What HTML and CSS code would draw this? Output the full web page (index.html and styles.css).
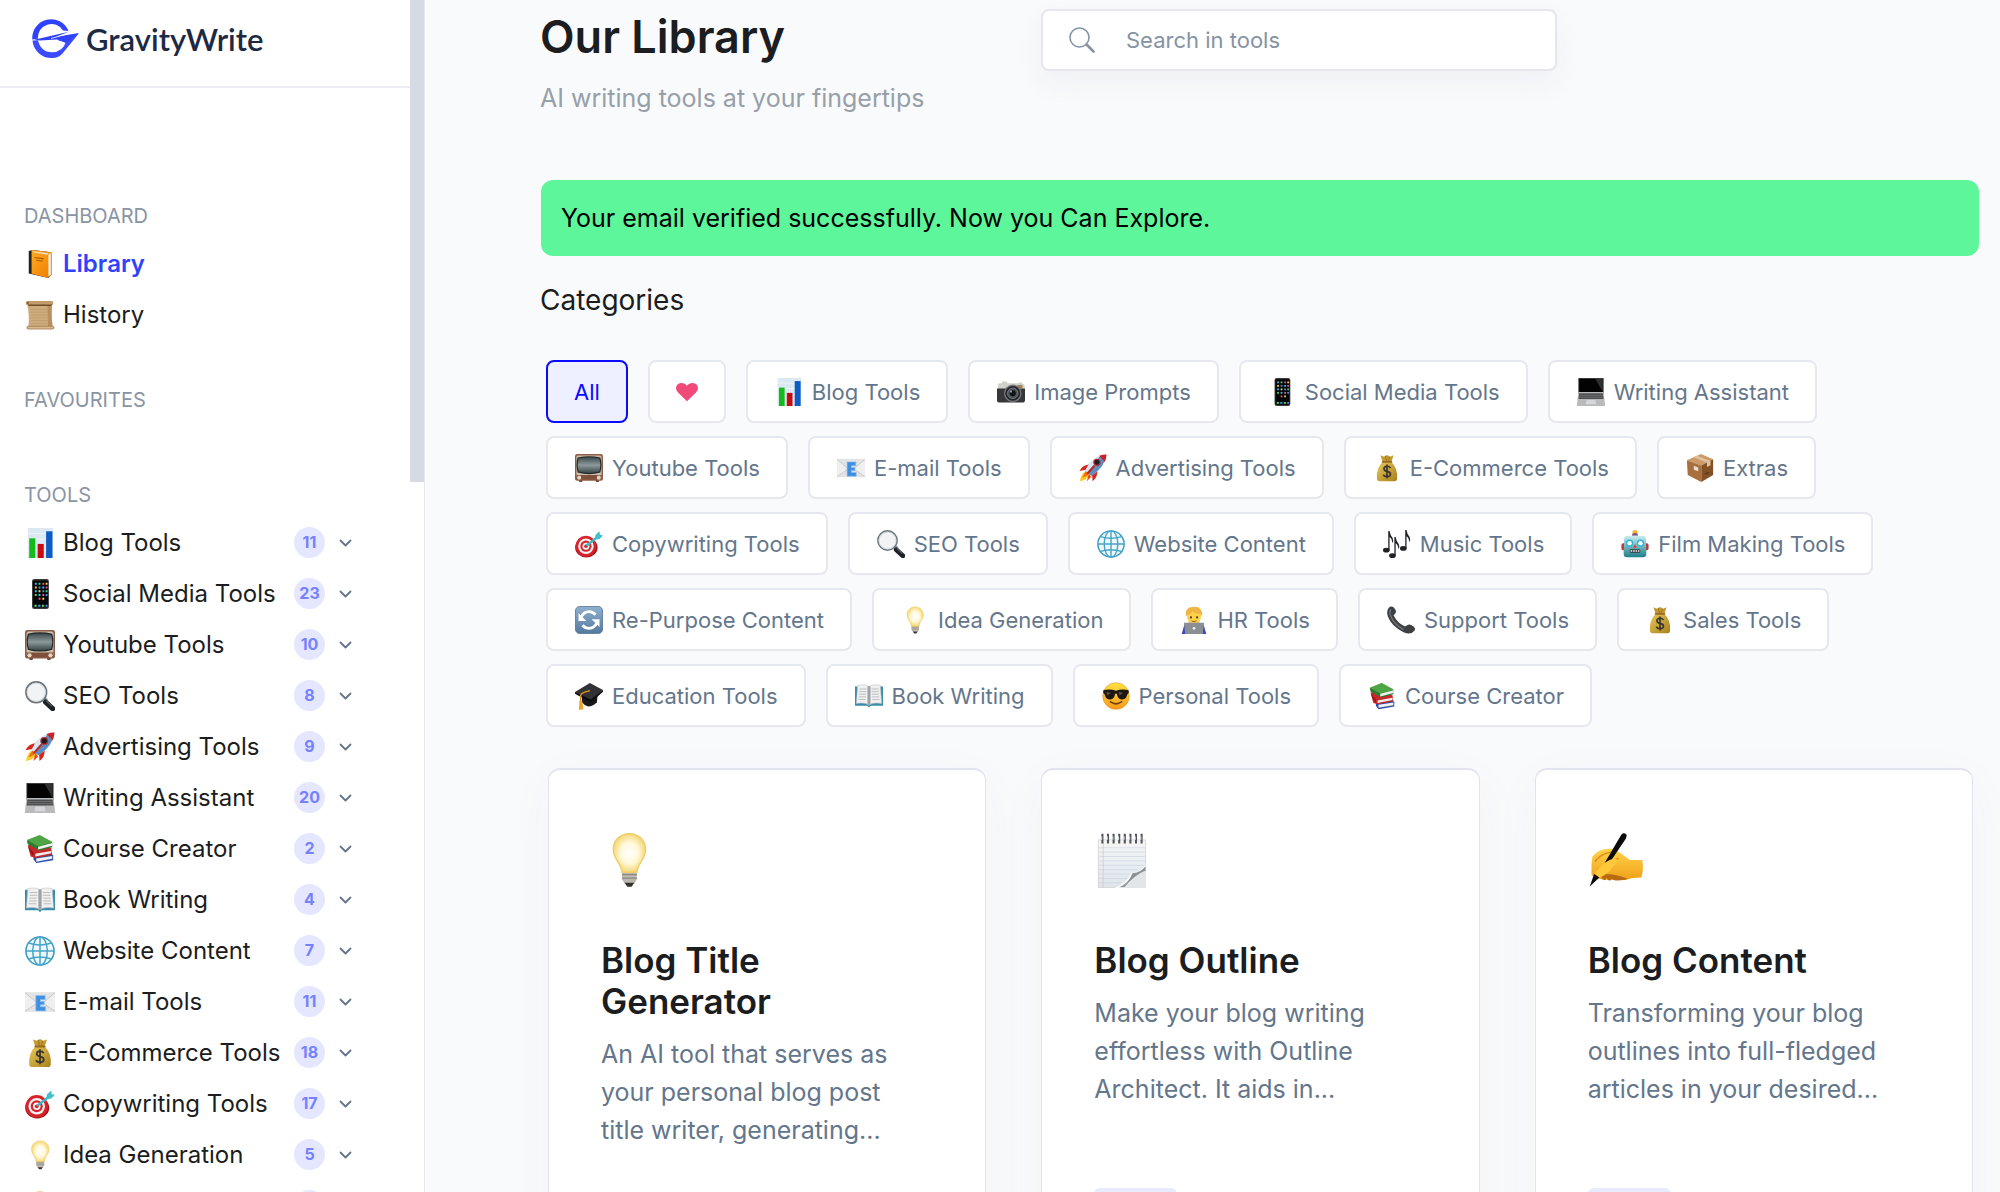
FILE: index.html
```html
<!DOCTYPE html>
<html lang="en">
<head>
    <meta charset="utf-8">
    <title>GravityWrite</title>
    <link rel="stylesheet" href="styles.css">
</head>
<body>
    <!-- icon set -->
    <svg class="sprite" aria-hidden="true">
        <defs>
            <linearGradient id="gScreen" x1="0" y1="0" x2="0" y2="1"><stop offset="0" stop-color="#3f4a4c"/><stop offset=".5" stop-color="#8c9a9b"/><stop offset="1" stop-color="#3a4546"/></linearGradient>
            <linearGradient id="gBlue" x1="0" y1="0" x2="0" y2="1"><stop offset="0" stop-color="#8fb0cf"/><stop offset="1" stop-color="#54799f"/></linearGradient>
            <linearGradient id="gGold" x1="0" y1="0" x2="1" y2="1"><stop offset="0" stop-color="#e8c95a"/><stop offset="1" stop-color="#a8801b"/></linearGradient>
            <linearGradient id="gOrange" x1="0" y1="0" x2="1" y2="1"><stop offset="0" stop-color="#ffab1f"/><stop offset="1" stop-color="#ee7d00"/></linearGradient>
            <linearGradient id="gTeal" x1="0" y1="0" x2="0" y2="1"><stop offset="0" stop-color="#c9eeee"/><stop offset="1" stop-color="#1e7f8c"/></linearGradient>
            <linearGradient id="gFace" x1="0" y1="0" x2="0" y2="1"><stop offset="0" stop-color="#ffe23f"/><stop offset="1" stop-color="#f79a1c"/></linearGradient>
            <radialGradient id="gBulb"><stop offset="0" stop-color="#ffffff"/><stop offset=".55" stop-color="#fff9da"/><stop offset="1" stop-color="#f6d877"/></radialGradient>
            <linearGradient id="gPaper" x1="0" y1="0" x2="0" y2="1"><stop offset="0" stop-color="#f6f5f2"/><stop offset=".5" stop-color="#e9eef3"/><stop offset="1" stop-color="#dfe4e8"/></linearGradient>
            <linearGradient id="gHand" x1="0" y1="0" x2="0" y2="1"><stop offset="0" stop-color="#ffd54a"/><stop offset="1" stop-color="#f0a01a"/></linearGradient>
        </defs>
        <symbol id="book" viewBox="0 0 32 32">
            <path d="M4 2L8 1 28 3.500V27L25 31 4 26z" fill="#222"/>
            <path d="M8 2.500L28 4V27.500L24 30V7z" fill="#f4f4f0" stroke="#c77a16" stroke-width=".8"/>
            <path d="M7 1L28 3.500 25 6V31L7 26.500z" fill="url(#gOrange)"/>
            <path d="M8 2.500l17 2-1.500 1.500L9 3.500z" fill="#e9e4d6"/>
            <path d="M10 9l10 1.500M12 12l7 1" stroke="#a85c07" stroke-width="1.200"/>
        </symbol>
        <symbol id="scroll" viewBox="0 0 32 32">
            <path d="M2.500 5h26v24h-25q1.500-12-1-24z" fill="#cfac7c"/>
            <path d="M24 5h4.500q-1 12 1 23h-5z" fill="#b98f5d"/>
            <path d="M6 10h18M6 13h18M6 16h18M6 19h18M6 22h18M6 25h18" stroke="#bb9768" stroke-width=".7"/>
            <rect x="1" y="1" width="29" height="4.500" rx="1.500" fill="#c49c69"/>
            <path d="M3 4.800h26l-1 1.700H4z" fill="#6f4d2c"/>
            <rect x="2" y="28" width="29" height="3" rx="1.500" fill="#dbb98a" stroke="#8c6640" stroke-width=".7"/>
            <circle cx="3" cy="3.200" r="1.200" fill="#7f5a34"/>
        </symbol>
        <symbol id="chart" viewBox="0 0 32 32">
            <rect x="3" y="0" width="27" height="32" fill="#dce8f2"/>
            <path d="M3 6h27M3 12h27M3 18h27M3 24h27" stroke="#eef4f9"/>
            <rect x="4.500" y="11" width="6.500" height="21" fill="#14ba1b"/>
            <rect x="13.500" y="17" width="6.500" height="15" fill="#c30d12"/>
            <rect x="22.500" y="3.500" width="6.800" height="28.500" fill="#0d5cc4"/>
        </symbol>
        <symbol id="mobile" viewBox="0 0 32 32">
            <rect x="7.500" y="0" width="18" height="32" rx="2.500" fill="#3a3a3a"/>
            <rect x="8.500" y="1.500" width="16" height="29" rx="1.500" fill="#060606"/>
            <path d="M10.500 5h2M10.500 13h2M18.500 9h2M14.500 17h2" stroke="#34c5f5" stroke-width="2"/>
            <path d="M14.500 5h2M10.500 17h2M22 13h2M10 28.500h2.500M18 28.500h2.500" stroke="#48d868" stroke-width="2"/>
            <path d="M18.500 5h2M22 9h2M14.500 21h2M18.500 17h2" stroke="#f0508c" stroke-width="2"/>
            <path d="M22 5h2M10.500 9h2M18.500 21h2M14.500 13h2" stroke="#f5d24a" stroke-width="2"/>
            <path d="M14.500 9h2M18.500 13h2M22 17h2M14 28.500h2.500M22 28.500h2" stroke="#4a90f0" stroke-width="2"/>
        </symbol>
        <symbol id="tv" viewBox="0 0 32 32">
            <path d="M4 29h5l-1 3H5zM23 29h5l-1 3h-3z" fill="#6b4534"/>
            <rect x="0" y="0" width="32" height="30.500" rx="2.500" fill="#8c5c47"/>
            <rect x="1.600" y="1.600" width="28.800" height="27" rx="2" fill="#cbbfae"/>
            <path d="M3 4q13-3 26 0 2.500 8 0 17-13 4-26 0-2.500-9 0-17z" fill="#20282a"/>
            <path d="M4 5q12-2.500 24 0 2 7.500 0 15-12 3.500-24 0-2-7.500 0-15z" fill="url(#gScreen)"/>
            <rect x="1.600" y="24" width="28.800" height="5" fill="#80503d"/>
            <circle cx="4.800" cy="27" r="2.300" fill="#e5d6c4"/><circle cx="27.200" cy="27" r="2.300" fill="#e5d6c4"/>
        </symbol>
        <symbol id="lens" viewBox="0 0 32 32">
            <path d="M18.500 19l3-2.500 3 3.500-3 2.500z" fill="#9aa2a8"/>
            <path d="M22 22.500l7.500 7" stroke="#1d2226" stroke-width="5.500" stroke-linecap="round"/>
            <path d="M22.500 21l6.500 6" stroke="#5a646b" stroke-width="1.200"/>
            <circle cx="12" cy="12" r="11" fill="#f1f3f4" stroke="#6b747b" stroke-width="1.800"/>
            <circle cx="12" cy="12" r="9.800" fill="none" stroke="#cdd3d7" stroke-width="1"/>
        </symbol>
        <symbol id="rocket" viewBox="0 0 32 32">
            <path d="M8 19Q2 23 1 31q7-1 12-7z" fill="#ffc928"/>
            <path d="M8 20q-3 3-4 7 4-1 7-4z" fill="#f36c12"/>
            <path d="M12 12Q4 12 .5 19.500L8 18zM21 20q0 7-5.500 11L15 24z" fill="#d8261c"/>
            <path d="M11 23l-2 8 5-5z" fill="#e84a1a"/>
            <path d="M7 19Q13 4 31 .5 30 15 14 25z" fill="#5c8fc0"/>
            <path d="M7 19Q13 5 24 2L11 22z" fill="#dbe7f2"/>
            <path d="M23 2q4-1.500 8.500-1.500Q31 6 29.500 9z" fill="#c9222a"/>
            <circle cx="20.500" cy="9.500" r="4.200" fill="#b52a2c"/><circle cx="20.500" cy="9.500" r="2.800" fill="#1c1d24"/>
            <path d="M17 14l-7 8" stroke="#b62a27" stroke-width="2.400" stroke-linecap="round"/>
        </symbol>
        <symbol id="laptop" viewBox="0 0 32 32">
            <path d="M1.500 0h29v18.500h-29z" fill="#3f4143"/>
            <path d="M2.500 1h27v15h-27z" fill="#030303"/>
            <path d="M21 1h8.500v15z" fill="#2e3032"/>
            <path d="M1.500 16h29l1.500 14v2H0v-2z" fill="#b9babb"/>
            <path d="M2.500 17.500h27l.8 6.500H1.800z" fill="#4b4d4f"/>
            <path d="M2 19.700h28M2 22h28" stroke="#808284" stroke-width=".7"/>
            <path d="M11 25h10l1 5H10z" fill="#d6d7d8"/>
        </symbol>
        <symbol id="books" viewBox="0 0 32 32">
            <path d="M9 22l18-2 3 3v5l-18 3-3-4z" fill="#2b4ba6"/>
            <path d="M12 26l17-2.500v3L12 29.500z" fill="#f2f2f4"/>
            <path d="M3 12l6-1 19 4 1 7-18 3.500L6 24z" fill="#c9282a"/>
            <path d="M11 21l17-3v2.500L11 24z" fill="#efeff2"/>
            <path d="M3 13l6 7v4L5 18z" fill="#8d1518"/>
            <path d="M2 7l14-5.500L29 9v5l-14 3.500L3 11z" fill="#2c7c2e"/>
            <path d="M2 6.500L15.500 1 29.500 8.500 14 13z" fill="#4fa443"/>
            <path d="M14 13.500l15-4v3L14 16.500z" fill="#f1f2ee"/>
        </symbol>
        <symbol id="openbook" viewBox="0 0 32 32">
            <path d="M0 5h32v22H18l-2 2-2-2H0z" fill="#3b8bab"/>
            <path d="M1.500 24.500L3 4q8-2 13 1 5-3 13-1l1.500 20.500Q20 23 16 26.500 12 23 1.500 24.500z" fill="#f0f0ee" stroke="#b9bcc0" stroke-width=".6"/>
            <path d="M14 5q2-1 4 0v20l-2 1.500-2-1.500z" fill="#b5b9be"/>
            <path d="M16 5v21" stroke="#74797f" stroke-width=".8"/>
            <path d="M5 8h8M5 11h8M4.700 14h8M4.500 17h8M4 20h8M19 8h8M19 11h8M19.300 14h8M19.500 17h8M20 20h8" stroke="#a8abb0" stroke-width=".8"/>
        </symbol>
        <symbol id="globe" viewBox="0 0 32 32">
            <circle cx="16" cy="16" r="15" fill="#f0f9fd" stroke="#3d9cc0" stroke-width="1.700"/>
            <g fill="none" stroke="#45a5c9" stroke-width="1.600"><ellipse cx="16" cy="16" rx="7.800" ry="15"/><path d="M16 1v30M1 16h30M4 7.500q12 4 24 0M4 24.500q12-4 24 0"/></g>
        </symbol>
        <symbol id="email" viewBox="0 0 32 32">
            <rect x="0" y="5.500" width="32" height="21" fill="#e4e4e5"/>
            <path d="M0 6l13 11L0 26M32 6L19 17l13 9" fill="#efeff0" stroke="#bfc0c2" stroke-width=".9"/>
            <path d="M11.500 9h10v4.500h-5v2h4v3.500h-4v2h5.500v4.500H11.500z" fill="#3f8fe0" stroke="#8fc2f4" stroke-width=".8"/>
        </symbol>
        <symbol id="moneybag" viewBox="0 0 32 32">
            <path d="M11 9L8.500 1.500l4 1.500L16 1l3.500 2 4-1.500L21 9z" fill="#c39a30"/>
            <path d="M14 2l1.500 6M19 3l-1.500 5" stroke="#8a6616" stroke-width=".8"/>
            <path d="M11 9h10q7.500 7 6.500 19 0 3-3 3h-17q-3 0-3-3Q3.500 16 11 9z" fill="url(#gGold)"/>
            <rect x="10" y="8" width="12" height="2" rx="1" fill="#9a6a22"/>
            <path d="M20 16q-1.500-2-4-2-3.500.3-3.500 2.900 0 2.300 3.500 2.900 4 .6 4 3.400 0 2.600-4 2.800-3 0-4.300-2.300M16 12v16" fill="none" stroke="#3a3630" stroke-width="1.900"/>
        </symbol>
        <symbol id="dart" viewBox="0 0 32 32">
            <ellipse cx="13" cy="20" rx="12.800" ry="11.500" fill="#a80f16"/>
            <circle cx="12.500" cy="18.500" r="12" fill="#d8232b"/>
            <circle cx="12.500" cy="18.500" r="8.800" fill="#f5f5f5"/>
            <circle cx="12.500" cy="18.500" r="6.400" fill="#d8232b"/>
            <circle cx="12.500" cy="18.500" r="4" fill="#f5f5f5"/>
            <circle cx="12.500" cy="18.500" r="2" fill="#d8232b"/>
            <path d="M13 18L27 7" stroke="#38b8c6" stroke-width="2.600"/>
            <path d="M22.500 11l1-5.500L28 1.500l.5 4 3.500.7-4 4z" fill="#41c0cc"/>
        </symbol>
        <symbol id="bulb" viewBox="0 0 32 32">
            <path d="M12 22h8.500v5l-1.500 2.500h-5.500L12 27z" fill="#bdb8af"/>
            <path d="M12 24.300h8.500M12 26.300h8.500" stroke="#8d887f" stroke-width=".7"/>
            <path d="M13.500 29h5.500l-1.500 2.300h-2.500z" fill="#34322f"/>
            <path d="M16.200 1c-5.500 0-9.200 4-9.200 9 0 5.500 4.500 7.500 5 13h8.500c.5-5.500 5-7.500 5-13 0-5-3.800-9-9.300-9z" fill="url(#gBulb)" stroke="#efcd67" stroke-width=".8"/>
        </symbol>
        <symbol id="cool" viewBox="0 0 32 32">
            <circle cx="16" cy="16" r="15.200" fill="url(#gFace)" stroke="#e08a1a" stroke-width=".6"/>
            <path d="M1.500 9.500Q9 7.500 16 10q7-2.500 14.500-.5v3q-1.500.5-2 3-1 4.500-6 4.500-4.500 0-5.500-6.500h-2Q14 20 9.500 20q-5 0-6-4.500-.5-2.500-2-3z" fill="#1c1712"/>
            <path d="M5 11l5 1.500-4 3M19 11l5 1.500-4 3" fill="#5a5149"/>
            <path d="M9.500 22.500q6.500 5 13 0" fill="none" stroke="#73400c" stroke-width="1.700" stroke-linecap="round"/>
        </symbol>
        <symbol id="camera" viewBox="0 0 32 32">
            <path d="M1 8q0-2 2-2h2l1-2h5l1 2h13V5h4v1.500q2 0 2.500 2V13H1z" fill="#d2d2cc"/>
            <path d="M0 12h32v13q0 3-3 3H3q-3 0-3-3z" fill="#35373a"/>
            <rect x="23.500" y="8" width="5.500" height="4" fill="#9b8350"/>
            <circle cx="18" cy="17.500" r="10" fill="#77797b"/><circle cx="18" cy="17.500" r="8.500" fill="#222427"/>
            <circle cx="18" cy="17.500" r="6" fill="#4d5256" stroke="#929699" stroke-width=".8"/><circle cx="18" cy="17.500" r="3.500" fill="#121417"/>
            <circle cx="16" cy="15.500" r="1.300" fill="#90a0ac"/>
        </symbol>
        <symbol id="box" viewBox="0 0 32 32">
            <path d="M1 7L17 0l14 6-13.500 7z" fill="#cb9a68"/>
            <path d="M1 7l16.500 6V32L2 24z" fill="#a96f3c"/>
            <path d="M17.500 13L31 6v18L17.500 32z" fill="#845026"/>
            <path d="M8.500 3.700L24 9.800v5l4-2V8L12.500 2z" fill="#e0c19c"/>
            <path d="M9 13.500l5 1.800v4.500L9 18z" fill="#e5ded5"/>
            <path d="M22 23l4-2" stroke="#5a3417" stroke-width="1.500"/>
        </symbol>
        <symbol id="music" viewBox="0 0 32 32">
            <g fill="#202326">
                <ellipse cx="3.800" cy="23" rx="3.800" ry="2.600"/><path d="M6 1h1.500q.5 4.500 3.500 8 1.500 3-.5 6 0-5-3-7v15H6z"/>
                <ellipse cx="10.800" cy="29.300" rx="3.800" ry="2.600"/><path d="M13 8h1.500q.5 4.500 3.500 8 1.500 3-.5 6 0-5-3-7v14.500H13z"/>
                <ellipse cx="23.200" cy="21" rx="3.800" ry="2.600"/><path d="M25.400 0h1.500q.5 4.500 3.500 8 1.500 3-.5 6 0-5-3-7v14h-1.500z"/>
            </g>
        </symbol>
        <symbol id="robot" viewBox="0 0 32 32">
            <circle cx="16" cy="3" r="3" fill="#f5b52d"/><path d="M12.500 6.500q0-3 3.500-3t3.500 3z" fill="#76548a"/>
            <rect x=".5" y="15" width="5" height="8" rx="2" fill="#b9343c"/><rect x="26.500" y="15" width="5" height="8" rx="2" fill="#b9343c"/>
            <path d="M7 6.500h18q3.500 0 3.500 4L29 27q0 4-4 4H7q-4 0-4-4l.5-16.500q0-4 3.500-4z" fill="url(#gTeal)"/>
            <circle cx="9.800" cy="15" r="4.200" fill="#30b6d8"/><circle cx="22.200" cy="15" r="4.200" fill="#30b6d8"/>
            <circle cx="9.800" cy="15" r="2.500" fill="#fff"/><circle cx="22.200" cy="15" r="2.500" fill="#fff"/>
            <path d="M16 16l2.200 4.200h-4.400z" fill="#d2433c"/>
            <rect x="10" y="22" width="12" height="4" rx="1.500" fill="#37393d"/><path d="M11 24h10" stroke="#f4f4f4" stroke-width="1.800" stroke-dasharray="1.800 1"/>
        </symbol>
        <symbol id="cycle" viewBox="0 0 32 32">
            <rect x=".5" y=".5" width="31" height="31" rx="5" fill="url(#gBlue)" stroke="#57779a"/>
            <path d="M6.500 14q3-7.500 9.500-7.500 4.500 0 7.500 3.500M25.500 18q-3 7.500-9.500 7.500-4.500 0-7.500-3.500" fill="none" stroke="#fff" stroke-width="3.200"/>
            <path d="M4 8v9h9zM28 24v-9h-9z" fill="#fff"/>
        </symbol>
        <symbol id="coder" viewBox="0 0 32 32">
            <path d="M2 32l3-11q11-6 22 0l3 11z" fill="#3b46c4"/>
            <path d="M8 11q0-8 8-8t8 8q0 9-8 10-8-1-8-10z" fill="#ffd04b"/>
            <path d="M6.500 12Q5 1 15 1q11-1 10.500 11l-2-3q-6 0-9-3-2 3.500-6 4z" fill="#efb544"/>
            <circle cx="12.500" cy="13" r="1.200" fill="#513617"/><circle cx="19.500" cy="13" r="1.200" fill="#513617"/>
            <path d="M13 17q3 1.800 6 0" fill="none" stroke="#8a5417"/>
            <path d="M4.500 19h23L26 32H6z" fill="#8b8f94"/><circle cx="16" cy="25.500" r="1.500" fill="#f2f2f2"/>
        </symbol>
        <symbol id="tel" viewBox="0 0 32 32">
            <path d="M2 2q3-3 6 0 4 4 1 7l-1.500 1.500q4 8.500 13 13L23 22q3-2 7 1 3.500 3 1 5.500-4 5-12 1.500Q5 23 1 12-1 6 2 2z" fill="#3e4144"/>
            <path d="M4.500 4q-2.500 3 0 8Q8 21 19 27" fill="none" stroke="#74787b" stroke-width="1.500"/>
        </symbol>
        <symbol id="gradcap" viewBox="0 0 32 32">
            <path d="M8 14l18-1-1 10q-5 5-10 5-4-1-7-5z" fill="#17181a"/>
            <path d="M0 11.500L17 1l15 8-14 13z" fill="#303235"/>
            <path d="M0 11.500L18 20l14-11v2L18 23.500 0 13.500z" fill="#0c0d0e"/>
            <path d="M17 10Q7 12 6.500 15v8" fill="none" stroke="#d88b1e" stroke-width="1.800"/>
            <path d="M5 22h3.500l1 9-5 1z" fill="#eda32d"/>
        </symbol>
        <symbol id="notepad" viewBox="0 0 32 32">
            <path d="M2.500 4.500h27V32h-27z" fill="url(#gPaper)" stroke="#c9cdd2" stroke-width=".4"/>
            <path d="M3 9h26M3 11.500h26M3 14h26M3 16.500h26M3 19h26M3 21.500h22M3 24h18M3 26.500h16M3 29h13" stroke="#c5d3de" stroke-width=".35"/>
            <path d="M5.300 6v26" stroke="#eebcbc" stroke-width=".4"/>
            <path d="M29.500 18.500V32h-18q7-2.500 9.500-8.500 5.500 0 8.500-5z" fill="#fafbfb"/>
            <path d="M29.500 19.500v3Q22 26 17.500 31.500H14.500Q20 29 22 23.500q4.500-.2 7.500-4z" fill="#8c9196"/>
            <path d="M29.500 22v10H17q6-7.500 12.500-10z" fill="#e3e6e9"/>
            <path d="M4.800 1v5.500M8 1v5.500M11.200 1v5.500M14.400 1v5.500M17.600 1v5.500M20.800 1v5.500M24 1v5.500M27.200 1v5.500" stroke="#50565c" stroke-width="1.200"/>
            <path d="M4.400 2.500v2M7.600 2.500v2M10.800 2.500v2M14 2.500v2M17.200 2.500v2M20.400 2.500v2M23.600 2.500v2M26.800 2.500v2" stroke="#e8edf0" stroke-width=".5"/>
        </symbol>
        <symbol id="writing" viewBox="0 0 32 32">
            <path d="M2.500 14Q6 9.500 12 9.500q3-.3 5 1.500 5 3.500 7 5h7q1 5-.5 10-5 0-8.500 1.300H9Q3 26 2 24.500q-.3-6 .5-10.500z" fill="url(#gHand)"/>
            <path d="M7 24q1 3 2.500 3.500 1-.3 1-1.500.8 1.800 2 1.700 1 0 1-1.200 1 1.400 3 1.200 5-.2 6-1-6-3-15.500-2.700z" fill="#b86a10"/>
            <path d="M4 17q3-4.500 9-5.500M5.500 22q4-4.500 12-7" fill="none" stroke="#d98b15" stroke-width=".8"/>
            <path d="M19 1.500q1.500-1.500 2.800-.2Q22.500 2 21.500 4L13 16.500l-4 2z" fill="#0b0b0b"/>
            <path d="M3.500 24l3 2-5.500 5.200z" fill="#0b0b0b"/>
            <path d="M4 23.500Q9 16 16 15q1.500 2-1.500 4.500Q11 24.500 6.500 26z" fill="#ffc93a"/>
        </symbol>
        <symbol id="chevron" viewBox="0 0 12 8">
            <path d="M1 1.500L6 6.500 11 1.500" fill="none" stroke="currentColor" stroke-width="1.800" stroke-linecap="round" stroke-linejoin="round"/>
        </symbol>
    </svg>

    <div class="layout">
        <aside class="sidebar">
            <a class="brand" href="#">
                <svg class="brand-mark" viewBox="0 0 48 40" aria-hidden="true">
                    <path d="M36.500 12A18.800 18.800 0 0 0 .3 20.500L6 19.800A13.500 13.500 0 0 1 31 11.500z" fill="#2f43ff"/>
                    <path d="M.5 21.500A19 19 0 0 0 20 39q6.500 0 10.500-4.500L47 14.200 26 21.500l8 1q-3 10.500-14 10.800Q8.500 33 6 21.300z" fill="#3d4bff"/>
                    <path d="M2 20.800L37 12.800l-13 5 3-.5L47 14 34 24 25 20.500 8 21.500z" fill="#2f43ff"/>
                    <path d="M19 19.500l18-5" stroke="#fff" stroke-width=".8"/>
                </svg>
                <span class="brand-name">GravityWrite</span>
            </a>
            <h2 class="nav-label nav-label-first">DASHBOARD</h2>
            <nav class="nav-list">
                <a class="nav-item active" href="#"><svg class="nav-icon"><use href="#book"/></svg>Library</a>
                <a class="nav-item" href="#"><svg class="nav-icon"><use href="#scroll"/></svg>History</a>
            </nav>
            <h2 class="nav-label nav-label-fav">FAVOURITES</h2>
            <h2 class="nav-label nav-label-tools">TOOLS</h2>
            <div class="nav-list">
                <button class="nav-item"><svg class="nav-icon"><use href="#chart"/></svg>Blog Tools<span class="count">11</span><svg class="chevron"><use href="#chevron"/></svg></button>
                <button class="nav-item"><svg class="nav-icon"><use href="#mobile"/></svg>Social Media Tools<span class="count">23</span><svg class="chevron"><use href="#chevron"/></svg></button>
                <button class="nav-item"><svg class="nav-icon"><use href="#tv"/></svg>Youtube Tools<span class="count">10</span><svg class="chevron"><use href="#chevron"/></svg></button>
                <button class="nav-item"><svg class="nav-icon"><use href="#lens"/></svg>SEO Tools<span class="count">8</span><svg class="chevron"><use href="#chevron"/></svg></button>
                <button class="nav-item"><svg class="nav-icon"><use href="#rocket"/></svg>Advertising Tools<span class="count">9</span><svg class="chevron"><use href="#chevron"/></svg></button>
                <button class="nav-item"><svg class="nav-icon"><use href="#laptop"/></svg>Writing Assistant<span class="count">20</span><svg class="chevron"><use href="#chevron"/></svg></button>
                <button class="nav-item"><svg class="nav-icon"><use href="#books"/></svg>Course Creator<span class="count">2</span><svg class="chevron"><use href="#chevron"/></svg></button>
                <button class="nav-item"><svg class="nav-icon"><use href="#openbook"/></svg>Book Writing<span class="count">4</span><svg class="chevron"><use href="#chevron"/></svg></button>
                <button class="nav-item"><svg class="nav-icon"><use href="#globe"/></svg>Website Content<span class="count">7</span><svg class="chevron"><use href="#chevron"/></svg></button>
                <button class="nav-item"><svg class="nav-icon"><use href="#email"/></svg>E-mail Tools<span class="count">11</span><svg class="chevron"><use href="#chevron"/></svg></button>
                <button class="nav-item"><svg class="nav-icon"><use href="#moneybag"/></svg>E-Commerce Tools<span class="count">18</span><svg class="chevron"><use href="#chevron"/></svg></button>
                <button class="nav-item"><svg class="nav-icon"><use href="#dart"/></svg>Copywriting Tools<span class="count">17</span><svg class="chevron"><use href="#chevron"/></svg></button>
                <button class="nav-item"><svg class="nav-icon"><use href="#bulb"/></svg>Idea Generation<span class="count">5</span><svg class="chevron"><use href="#chevron"/></svg></button>
                <button class="nav-item" aria-label="Personal Tools"><svg class="nav-icon"><use href="#cool"/></svg><span class="count"></span><svg class="chevron"><use href="#chevron"/></svg></button>
            </div>
            <div class="scroll-thumb"></div>
        </aside>

        <main class="main">
            <header class="page-head">
                <div class="page-title">
                    <h1>Our Library</h1>
                    <p>AI writing tools at your fingertips</p>
                </div>
                <label class="search">
                    <svg class="search-icon" viewBox="0 0 26 26" aria-hidden="true">
                        <circle cx="10.500" cy="10.500" r="9.500" fill="none" stroke="currentColor" stroke-width="1.600"/>
                        <path d="M17.500 17.500l7 7" stroke="currentColor" stroke-width="2.600" stroke-linecap="round"/>
                    </svg>
                    <input type="search" placeholder="Search in tools" aria-label="Search in tools">
                </label>
            </header>

            <div class="alert" role="status">Your email verified successfully. Now you Can Explore.</div>

            <h2 class="section-title">Categories</h2>
            <div class="chips">
                <button class="chip selected">All</button>
                <button class="chip" aria-label="Favourites">
                    <svg class="heart" viewBox="0 0 24 20"><path d="M12 20L2.200 10.500C-.8 7.500-.5 3.500 2 1.500 5-.9 9.500-.2 12 3.200 14.500-.2 19-.9 22 1.500c2.500 2 2.800 6-.2 9z" fill="#f04b78"/></svg>
                </button>
                <button class="chip"><svg class="chip-icon"><use href="#chart"/></svg>Blog Tools</button>
                <button class="chip"><svg class="chip-icon"><use href="#camera"/></svg>Image Prompts</button>
                <button class="chip"><svg class="chip-icon"><use href="#mobile"/></svg>Social Media Tools</button>
                <button class="chip"><svg class="chip-icon"><use href="#laptop"/></svg>Writing Assistant</button>
                <button class="chip"><svg class="chip-icon"><use href="#tv"/></svg>Youtube Tools</button>
                <button class="chip"><svg class="chip-icon"><use href="#email"/></svg>E-mail Tools</button>
                <button class="chip"><svg class="chip-icon"><use href="#rocket"/></svg>Advertising Tools</button>
                <button class="chip"><svg class="chip-icon"><use href="#moneybag"/></svg>E-Commerce Tools</button>
                <button class="chip"><svg class="chip-icon"><use href="#box"/></svg>Extras</button>
                <button class="chip"><svg class="chip-icon"><use href="#dart"/></svg>Copywriting Tools</button>
                <button class="chip"><svg class="chip-icon"><use href="#lens"/></svg>SEO Tools</button>
                <button class="chip"><svg class="chip-icon"><use href="#globe"/></svg>Website Content</button>
                <button class="chip"><svg class="chip-icon"><use href="#music"/></svg>Music Tools</button>
                <button class="chip"><svg class="chip-icon"><use href="#robot"/></svg>Film Making Tools</button>
                <button class="chip"><svg class="chip-icon"><use href="#cycle"/></svg>Re-Purpose Content</button>
                <button class="chip"><svg class="chip-icon"><use href="#bulb"/></svg>Idea Generation</button>
                <button class="chip"><svg class="chip-icon"><use href="#coder"/></svg>HR Tools</button>
                <button class="chip"><svg class="chip-icon"><use href="#tel"/></svg>Support Tools</button>
                <button class="chip"><svg class="chip-icon"><use href="#moneybag"/></svg>Sales Tools</button>
                <button class="chip"><svg class="chip-icon"><use href="#gradcap"/></svg>Education Tools</button>
                <button class="chip"><svg class="chip-icon"><use href="#openbook"/></svg>Book Writing</button>
                <button class="chip"><svg class="chip-icon"><use href="#cool"/></svg>Personal Tools</button>
                <button class="chip"><svg class="chip-icon"><use href="#books"/></svg>Course Creator</button>
            </div>

            <div class="cards">
                <article class="card">
                    <svg class="card-icon"><use href="#bulb"/></svg>
                    <h3>Blog Title Generator</h3>
                    <p>An AI tool that serves as your personal blog post title writer, generating...</p>
                    <span class="tag"></span>
                </article>
                <article class="card">
                    <svg class="card-icon"><use href="#notepad"/></svg>
                    <h3>Blog Outline</h3>
                    <p>Make your blog writing effortless with Outline Architect. It aids in...</p>
                    <span class="tag"></span>
                </article>
                <article class="card">
                    <svg class="card-icon"><use href="#writing"/></svg>
                    <h3>Blog Content</h3>
                    <p>Transforming your blog outlines into full-fledged articles in your desired...</p>
                    <span class="tag"></span>
                </article>
            </div>
        </main>
    </div>
</body>
</html>
```
FILE: styles.css
```css
* {
    box-sizing: border-box;
}

body {
    margin: 0;
    font-family: Inter, sans-serif;
    background-color: #F9FAFC;
    color: #1B1D20;
}

h1, h2, h3, p {
    margin: 0;
}

button {
    font: inherit;
    cursor: pointer;
}

.sprite {
    position: absolute;
    width: 0;
    height: 0;
}

.layout {
    display: flex;
    height: 100vh;
    overflow: hidden;
}

/* sidebar */

.sidebar {
    position: relative;
    flex: 0 0 425px;
    padding-right: 14px;
    background-color: #FFFFFF;
    border-right: 1px solid #E4E7ED;
    overflow: hidden;
}

.scroll-thumb {
    position: absolute;
    top: 0;
    right: 0;
    width: 14px;
    height: 482px;
    background-color: #D6DAE3;
}

.brand {
    display: flex;
    align-items: center;
    gap: 6px;
    height: 88px;
    padding: 0 0 8px 32px;
    border-bottom: 2px solid #ECEEF3;
    color: #1C2A44;
    text-decoration: none;
}

.brand-mark {
    width: 48px;
    height: 40px;
}

.brand-name {
    font-family: Lato, sans-serif;
    font-size: 31px;
    font-weight: 600;
    line-height: 40px;
}

.nav-label {
    padding-left: 24px;
    font-size: 20px;
    font-weight: 400;
    line-height: 24px;
    color: #8995A3;
}

.nav-label-first {
    margin-top: 116px;
}

.nav-label-fav {
    margin-top: 48px;
}

.nav-label-tools {
    margin-top: 71px;
}

.nav-list {
    margin-top: 10px;
}

.nav-item {
    display: flex;
    align-items: center;
    width: 352px;
    height: 51px;
    padding: 0 0 0 25px;
    border: 0;
    background: none;
    font-size: 24px;
    color: #1B1D20;
    text-align: left;
    text-decoration: none;
}

.nav-item.active {
    font-weight: 600;
    color: #2F43FF;
}

.nav-icon {
    width: 30px;
    height: 30px;
    margin-right: 8px;
}

.count {
    width: 31px;
    height: 31px;
    margin-left: auto;
    border-radius: 50%;
    background-color: #E4E7FF;
    font-size: 16px;
    font-weight: 700;
    line-height: 31px;
    text-align: center;
    color: #7681FF;
}

.chevron {
    width: 13px;
    height: 8px;
    margin-left: 14px;
    color: #62748A;
}

/* main column */

.main {
    flex: 1;
    min-width: 0;
    padding: 9px 21px 0 115px;
}

.page-head {
    display: flex;
    align-items: flex-start;
}

.page-title {
    width: 501px;
}

.page-title h1 {
    font-size: 45px;
    font-weight: 600;
    line-height: 56px;
}

.page-title p {
    margin-top: 13px;
    font-size: 25px;
    line-height: 40px;
    color: #979FA8;
}

.search {
    display: flex;
    align-items: center;
    width: 516px;
    height: 62px;
    padding: 0 26px;
    border: 2px solid #E4E7EE;
    border-radius: 8px;
    background-color: #FFFFFF;
    box-shadow: 0 12px 30px rgba(60, 60, 80, 0.05);
    color: #8693A3;
}

.search-icon {
    width: 26px;
    height: 26px;
}

.search input {
    flex: 1;
    min-width: 0;
    margin-left: 31px;
    padding: 0;
    border: 0;
    outline: 0;
    background: none;
    font: inherit;
    font-size: 22px;
    color: #1B1D20;
}

.search input::placeholder {
    color: #8693A3;
}

.alert {
    margin-top: 62px;
    margin-left: 1px;
    padding: 18px 20px;
    border-radius: 12px;
    background-color: #5EF69A;
    font-size: 25px;
    line-height: 40px;
    color: #000000;
}

.section-title {
    margin-top: 24px;
    font-size: 28px;
    font-weight: 400;
    line-height: 40px;
}

.chips {
    display: flex;
    flex-wrap: wrap;
    gap: 13px 20px;
    margin-top: 40px;
    margin-left: 6px;
}

.chip {
    display: flex;
    align-items: center;
    height: 63px;
    padding: 0 26px;
    border: 2px solid #E6E8EF;
    border-radius: 8px;
    background-color: #FFFFFF;
    font-size: 22px;
    color: #64768B;
}

.chip.selected {
    border-color: #0A0AFF;
    background-color: #EEF0FF;
    color: #0A0AFF;
}

.chip-icon {
    width: 28px;
    height: 28px;
    margin: 0 9px 0 1px;
}

.heart {
    width: 22px;
    height: 20px;
}

.cards {
    display: grid;
    grid-template-columns: repeat(3, 1fr);
    gap: 55px;
    margin: 41px 6px 0 8px;
}

.card {
    padding: 62px 52px 60px;
    border: 1px solid #E2E3F0;
    border-top-width: 2px;
    border-radius: 12px;
    background-color: #FFFFFF;
    box-shadow: 0 12px 50px rgba(60, 70, 100, 0.04);
}

.card-icon {
    display: block;
    width: 56px;
    height: 56px;
}

.card h3 {
    margin-top: 52px;
    font-size: 35px;
    font-weight: 600;
    line-height: 41px;
}

.card p {
    margin-top: 13px;
    padding-right: 16px;
    font-size: 25px;
    line-height: 38px;
    color: #64768B;
}

.tag {
    display: block;
    width: 83px;
    height: 36px;
    margin-top: 80px;
    border-radius: 6px;
    background-color: #E8EAFF;
}
```
